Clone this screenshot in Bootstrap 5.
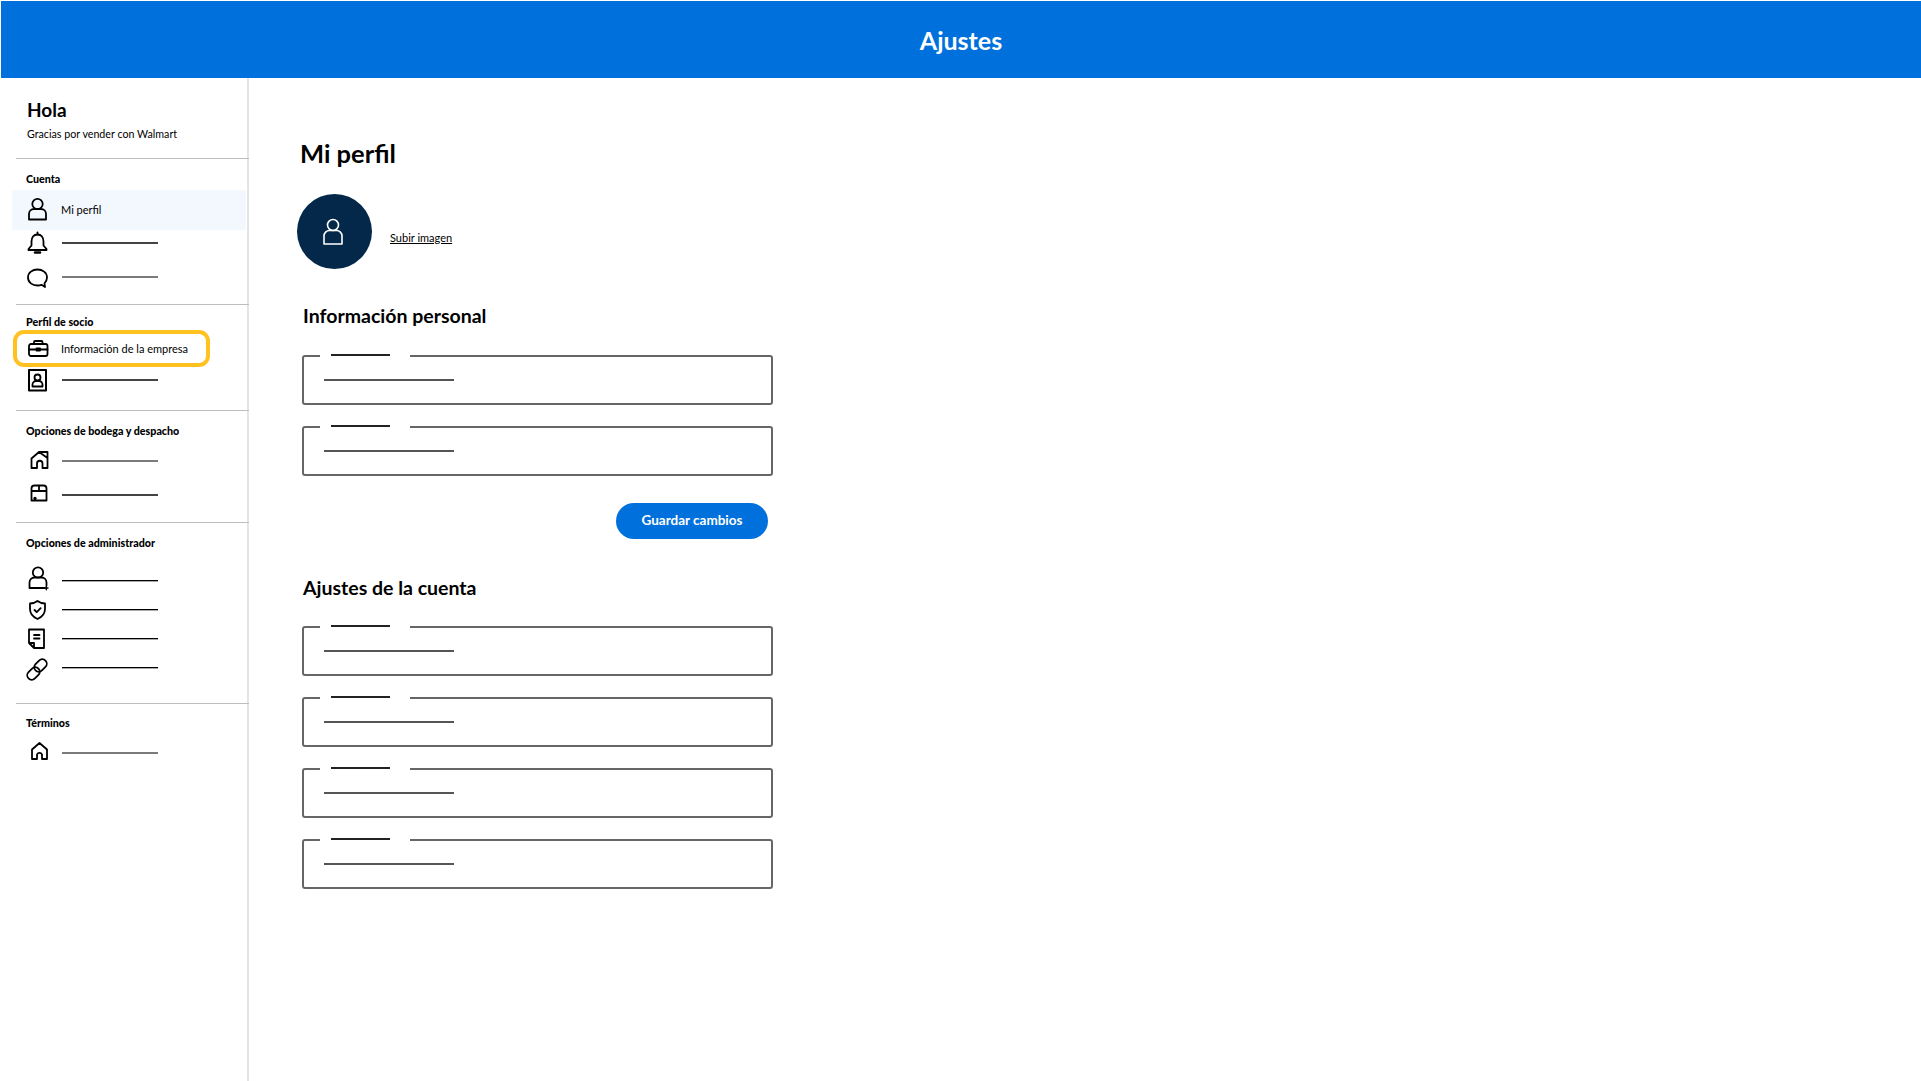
<!DOCTYPE html>
<html lang="es">
<head>
<meta charset="utf-8">
<title>Ajustes</title>
<link href="https://cdn.jsdelivr.net/npm/bootstrap@5.3.0/dist/css/bootstrap.min.css" rel="stylesheet">
<style>
body{font-family:Lato,"Liberation Sans",sans-serif;color:#000;background:#fff;padding:1px 0 0 1px;height:1081px;overflow:hidden}
.topbar{height:77px;background:#0071dc;color:#fff;font-size:25px;font-weight:700;padding-top:3px}
.shell{height:1003px}
.sidebar{width:248px;flex:none;border-right:2px solid #e4e4e4;padding-left:15px}
.greet{padding:20px 0 0 11px;border-bottom:1px solid #bdbdbd;margin-right:-2px;box-sizing:content-box;height:60px}
.greet-title{font-size:19px;font-weight:700;line-height:24px}
.greet-sub{font-size:10.7px;line-height:14px;margin-top:5px}
.side-sec{border-bottom:1px solid #bdbdbd;margin-right:-2px}
.side-sec.last{border-bottom:0}
.side-head{height:18px;line-height:18px;font-size:10.7px;font-weight:900;padding-left:10px}
.side-row{display:flex;align-items:center;height:34px;padding-left:10px;gap:11px;font-size:11px}
.side-row svg,.avatar svg{flex:none;fill:none;stroke:#000;stroke-width:1.8;stroke-linejoin:round;stroke-linecap:round;overflow:visible}
.row-on{height:40px;background:#f2f8fd;margin:2px 3px -4px -4px;padding-left:14px}
.row-flag{height:37px;width:197px;border:4px solid #ffc220;border-radius:11px;margin:-1px 0 -1px -3px;padding-left:9px}
.flag-text{padding-top:2px}
.row-short{height:28px}
.row-tight{height:29px}
.ph{width:96px;height:2px;background:#444;margin-left:1px}
.ph-gray{background:#7b7b7b}
.ph-black{background:#000;height:1px;box-shadow:0 1px 0 #aaa}
.pane{padding-left:48px}
.page-title{font-size:25.5px;font-weight:700;line-height:32px;margin:59px 0 0 3px}
.avatar{width:75px;height:75px;background:#04284a;border-radius:50%}
.avatar svg{stroke:#fff;stroke-width:1.6}
.upload{font-size:11px;color:#000;margin:13px 0 0 18px}
.sec-title{font-size:19.5px;font-weight:700;line-height:24px;margin:0 0 0 6px}
.field{position:relative;width:471px;height:50px;margin-left:5px;border:2px solid #666;border-radius:3px}
.field-gap{position:absolute;left:16px;top:-5px;width:90px;height:8px;background:#fff}
.field-gap::after{content:"";position:absolute;left:11px;top:2px;width:59px;height:2px;background:#222}
.field-line{position:absolute;left:20px;top:22px;width:130px;height:2px;background:#555}
.save{width:152px;height:36px;padding:0 0 1px;background:#0071dc;border:0;border-radius:18px;color:#fff;font-size:13.5px;font-weight:700;margin-right:5px}
.save-wrap{width:476px}
</style>
</head>
<body>
<header class="topbar d-flex align-items-center justify-content-center">Ajustes</header>
<div class="shell d-flex">
  <aside class="sidebar">
    <div class="greet">
      <div class="greet-title">Hola</div>
      <div class="greet-sub">Gracias por vender con Walmart</div>
    </div>

    <section class="side-sec" style="height:146px;padding-top:11px">
      <div class="side-head">Cuenta</div>
      <div class="side-row row-on">
        <svg width="24" height="24" viewBox="0 0 24 24"><circle cx="11.5" cy="6" r="5.2"/><path d="M3 21.5H20V16a5 5 0 0 0-5-5H8a5 5 0 0 0-5 5Z"/></svg>
        <span>Mi perfil</span>
      </div>
      <div class="side-row">
        <svg width="24" height="24" viewBox="0 0 24 24"><path d="M11.5 3.5c-4 0-6 3-6 7v4l-3 3.500v1h18v-1l-3-3.500v-4c0-4-2-7-6-7Z"/><path d="M11.5 1.500v2"/><path d="M9 21.500h5" stroke-width="2.500"/></svg>
        <span class="ph"></span>
      </div>
      <div class="side-row">
        <svg width="24" height="24" viewBox="0 0 24 24"><path d="M11.500 4.500c-5 0-9.500 3-9.500 8s4.500 8 9.500 8c1.500 0 3-.3 4-.7l3.500 2.200-.5-3.700c1.500-1.500 2.500-3.500 2.500-5.800 0-5-4.500-8-9.500-8Z"/></svg>
        <span class="ph ph-gray"></span>
      </div>
    </section>

    <section class="side-sec" style="height:106px;padding-top:8px">
      <div class="side-head">Perfil de socio</div>
      <div class="side-row row-flag">
        <svg width="24" height="24" viewBox="0 0 24 24"><rect x="3" y="7" width="18.500" height="12" rx="2"/><path d="M8 7V5a1 1 0 0 1 1-1h6.500a1 1 0 0 1 1 1v2M3 12.500h18.500"/><rect x="10.500" y="11.500" width="3.500" height="2" fill="#000"/></svg>
        <span class="flag-text">Información de la empresa</span>
      </div>
      <div class="side-row row-short">
        <svg width="24" height="24" viewBox="0 0 24 24"><rect x="3" y="2" width="17" height="20.500" stroke-width="2"/><circle cx="11.500" cy="9.500" r="3"/><path d="M6.500 18.500v-2a3.500 3.500 0 0 1 3.500-3.500h3a3.500 3.500 0 0 1 3.500 3.500v2Z"/></svg>
        <span class="ph"></span>
      </div>
    </section>

    <section class="side-sec" style="height:112px;padding-top:11px">
      <div class="side-head mb-1">Opciones de bodega y despacho</div>
      <div class="side-row">
        <svg width="24" height="24" viewBox="0 1.500 24 24"><path d="M5.500 20.500V11L13 4.500h8.500v16h-5V16a2.700 2.700 0 0 0-5.500 0v4.500ZM13 4.500l8.500 6"/></svg>
        <span class="ph ph-gray"></span>
      </div>
      <div class="side-row">
        <svg width="24" height="24" viewBox="0 2.500 24 24"><path d="M5.500 20V8a3 3 0 0 1 3-3h9a3 3 0 0 1 3 3v12ZM5.500 10.500h15M13 5v5.500"/><circle cx="9" cy="18" r=".8" fill="#000"/></svg>
        <span class="ph"></span>
      </div>
    </section>

    <section class="side-sec" style="height:181px;padding-top:11px">
      <div class="side-head" style="margin-bottom:14px">Opciones de administrador</div>
      <div class="side-row row-tight">
        <svg width="24" height="24" viewBox="0 2.500 24 24"><circle cx="12" cy="6" r="5.200"/><path d="M18.500 21.500H3.500V16a5 5 0 0 1 5-5h7a5 5 0 0 1 5 5v3"/><path d="M18.500 21.500h3.500M20.300 19.800v3.400" stroke-width="1.400"/></svg>
        <span class="ph ph-black"></span>
      </div>
      <div class="side-row row-tight">
        <svg width="24" height="24" viewBox="0 1 24 24"><path d="M11.500 4c2 1.500 5 2.500 7.500 2.500V12c0 5-3 8-7.500 10-4.500-2-7.500-5-7.500-10V6.500C6.500 6.500 9.500 5.500 11.500 4Z"/><path d="M8.500 13l2.200 2.200 4-4"/></svg>
        <span class="ph ph-black"></span>
      </div>
      <div class="side-row row-tight">
        <svg width="24" height="24" viewBox="1 1 24 24"><path d="M4 3.500H19V22H9l-5-5ZM4 17h5v5M9 9h5.500M9 12.500h5.500"/></svg>
        <span class="ph ph-black"></span>
      </div>
      <div class="side-row row-tight">
        <svg width="24" height="24" viewBox="1 -1 24 24"><rect x="1.500" y="12" width="14" height="9" rx="4.500" transform="rotate(-45 8.500 16.500)"/><rect x="8.500" y="4" width="14" height="9" rx="4.500" transform="rotate(-45 15.500 8.500)"/></svg>
        <span class="ph ph-black"></span>
      </div>
    </section>

    <section class="side-sec last" style="padding-top:10px">
      <div class="side-head mb-1">Términos</div>
      <div class="side-row">
        <svg width="24" height="24" viewBox="-.5 2.500 24 24"><path d="M5.500 20.500V11L13 4.500l7.500 6.500v9.500h-5V16a2.700 2.700 0 0 0-5 0v4.500Z"/></svg>
        <span class="ph ph-gray"></span>
      </div>
    </section>
  </aside>

  <main class="pane flex-grow-1">
    <h1 class="page-title">Mi perfil</h1>
    <div class="d-flex align-items-center" style="margin-top:25px">
      <div class="avatar d-flex align-items-center justify-content-center">
        <svg width="24" height="28" viewBox="2 0 24 28"><circle cx="12" cy="7" r="5.500"/><path d="M3 26H21V18a5.500 5.500 0 0 0-5.500-5.500h-7A5.500 5.500 0 0 0 3 18Z"/></svg>
      </div>
      <a href="#" class="upload">Subir imagen</a>
    </div>

    <h2 class="sec-title" style="margin-top:35px;margin-bottom:27px">Información personal</h2>
    <div class="field" style="margin-bottom:21px"><span class="field-gap"></span><span class="field-line"></span></div>
    <div class="field"><span class="field-gap"></span><span class="field-line"></span></div>
    <div class="save-wrap d-flex justify-content-end" style="margin-top:27px">
      <button type="button" class="btn save">Guardar cambios</button>
    </div>

    <h2 class="sec-title" style="margin-top:37px;margin-bottom:26px">Ajustes de la cuenta</h2>
    <div class="d-flex flex-column" style="gap:21px">
      <div class="field"><span class="field-gap"></span><span class="field-line"></span></div>
      <div class="field"><span class="field-gap"></span><span class="field-line"></span></div>
      <div class="field"><span class="field-gap"></span><span class="field-line"></span></div>
      <div class="field"><span class="field-gap"></span><span class="field-line"></span></div>
    </div>
  </main>
</div>
</body>
</html>
